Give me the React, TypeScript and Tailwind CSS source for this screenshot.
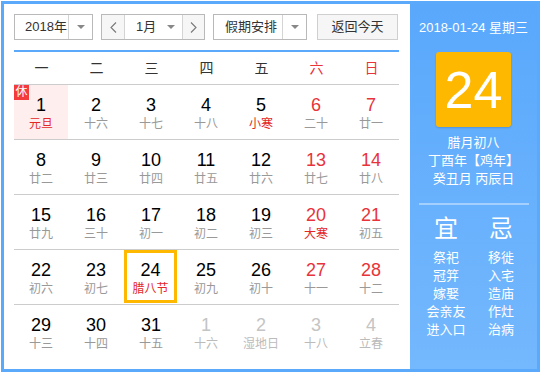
import React from 'react';

type Day = {
  num: number;
  lunar: string;
  weekend?: boolean;
  festival?: boolean;
  other?: boolean;
  rest?: boolean;
  today?: boolean;
};

const weekdays = ['一', '二', '三', '四', '五', '六', '日'];

const rows: Day[][] = [
  [
    { num: 1, lunar: '元旦', festival: true, rest: true },
    { num: 2, lunar: '十六' },
    { num: 3, lunar: '十七' },
    { num: 4, lunar: '十八' },
    { num: 5, lunar: '小寒', festival: true },
    { num: 6, lunar: '二十', weekend: true },
    { num: 7, lunar: '廿一', weekend: true },
  ],
  [
    { num: 8, lunar: '廿二' },
    { num: 9, lunar: '廿三' },
    { num: 10, lunar: '廿四' },
    { num: 11, lunar: '廿五' },
    { num: 12, lunar: '廿六' },
    { num: 13, lunar: '廿七', weekend: true },
    { num: 14, lunar: '廿八', weekend: true },
  ],
  [
    { num: 15, lunar: '廿九' },
    { num: 16, lunar: '三十' },
    { num: 17, lunar: '初一' },
    { num: 18, lunar: '初二' },
    { num: 19, lunar: '初三' },
    { num: 20, lunar: '大寒', weekend: true, festival: true },
    { num: 21, lunar: '初五', weekend: true },
  ],
  [
    { num: 22, lunar: '初六' },
    { num: 23, lunar: '初七' },
    { num: 24, lunar: '腊八节', festival: true, today: true },
    { num: 25, lunar: '初九' },
    { num: 26, lunar: '初十' },
    { num: 27, lunar: '十一', weekend: true },
    { num: 28, lunar: '十二', weekend: true },
  ],
  [
    { num: 29, lunar: '十三' },
    { num: 30, lunar: '十四' },
    { num: 31, lunar: '十五' },
    { num: 1, lunar: '十六', other: true },
    { num: 2, lunar: '湿地日', other: true },
    { num: 3, lunar: '十八', other: true },
    { num: 4, lunar: '立春', other: true },
  ],
];

const yi = ['祭祀', '冠笄', '嫁娶', '会亲友', '进入口'];
const ji = ['移徙', '入宅', '造庙', '作灶', '治病'];

function Caret() {
  return (
    <svg width="8" height="4" viewBox="0 0 8 4">
      <polygon points="0,0 8,0 4,4" fill="#888" />
    </svg>
  );
}

function Chevron({ dir }: { dir: 'left' | 'right' }) {
  return (
    <svg width="7" height="11" viewBox="0 0 7 11">
      <polyline
        points={dir === 'left' ? '6,0.5 1,5.5 6,10.5' : '1,0.5 6,5.5 1,10.5'}
        fill="none"
        stroke="#777"
        strokeWidth="1.1"
      />
    </svg>
  );
}

function DayCell({ day }: { day: Day }) {
  const numColor = day.other
    ? 'text-[#c4c4c4]'
    : day.weekend
    ? 'text-[#e8333b]'
    : 'text-black';
  const lunarColor = day.other
    ? 'text-[#bbbbbb]'
    : day.festival
    ? 'text-[#e32727]'
    : 'text-[#999999]';

  if (day.today) {
    return (
      <div className="h-full">
        <div className="flex h-[53px] w-[53px] flex-col items-center border-[3px] border-[#ffb800] pt-[7px]">
          <span className={`text-[18px] leading-[20px] ${numColor}`}>{day.num}</span>
          <span className={`mt-px text-[12px] leading-[16px] ${lunarColor}`}>{day.lunar}</span>
        </div>
      </div>
    );
  }

  return (
    <div className="h-full">
      <div
        className={`relative flex h-[54px] w-[54px] flex-col items-center pt-[10px] ${
          day.rest ? 'bg-[#ffeeee]' : ''
        }`}
      >
        {day.rest && (
          <span className="absolute left-0 top-0 flex h-[15px] w-[15px] items-center justify-center bg-[#f43b3b] text-[12px] leading-[15px] text-white">
            休
          </span>
        )}
        <span className={`text-[18px] leading-[20px] ${numColor}`}>{day.num}</span>
        <span className={`mt-px text-[12px] leading-[16px] ${lunarColor}`}>{day.lunar}</span>
      </div>
    </div>
  );
}

export default function App() {
  return (
    <div className="h-[375px] w-[543px] bg-white pl-px pt-px font-['Liberation_Sans','Noto_Sans_CJK_SC',sans-serif]">
      <div className="flex h-[371px] w-[539px] border-[3px] border-[#5aa9fb]">
        {/* left: calendar */}
        <div className="w-[406px] bg-white pl-[10px] pt-[10px]">
          <div className="flex h-[26px] text-[13px] text-[#333]">
            <div className="flex w-[79px] border border-[#b9b9b9] bg-white">
              <div className="flex flex-1 items-center pl-[10px]">2018年</div>
              <div className="flex w-[24px] items-center justify-center border-l border-[#d4d4d4]">
                <Caret />
              </div>
            </div>

            <div className="ml-[8px] flex w-[104px] border border-[#b9b9b9] bg-white">
              <div className="flex w-[22px] items-center justify-center bg-[#f6f6f6]">
                <Chevron dir="left" />
              </div>
              <div className="flex flex-1 items-center border-x border-[#d4d4d4] pl-[11px]">
                <span className="flex-1">1月</span>
                <span className="mr-[7px] flex">
                  <Caret />
                </span>
              </div>
              <div className="flex w-[21px] items-center justify-center bg-[#f6f6f6]">
                <Chevron dir="right" />
              </div>
            </div>

            <div className="ml-[8px] flex w-[94px] border border-[#b9b9b9] bg-white">
              <div className="flex flex-1 items-center pl-[11px]">假期安排</div>
              <div className="flex w-[24px] items-center justify-center border-l border-[#d4d4d4]">
                <Caret />
              </div>
            </div>

            <div className="ml-[10px] flex w-[81px] items-center justify-center border border-[#cfcfcf] bg-[#f6f6f6]">
              返回今天
            </div>
          </div>

          <div className="mt-[10px] h-[2px] w-[385px] bg-[#5aa9fb]" />

          <div className="grid h-[32px] w-[385px] grid-cols-7 items-center text-[14px]">
            {weekdays.map((w, i) => (
              <div
                key={w}
                className={`text-center ${i >= 5 ? 'text-[#e8333b]' : 'text-[#333]'}`}
              >
                {w}
              </div>
            ))}
          </div>

          {rows.map((row, ri) => (
            <div
              key={ri}
              className="grid h-[55px] w-[385px] grid-cols-7 border-t border-[#cccccc]"
            >
              {row.map((d, di) => (
                <DayCell key={di} day={d} />
              ))}
            </div>
          ))}
        </div>

        {/* right: detail panel */}
        <div className="flex flex-1 flex-col items-center bg-gradient-to-b from-[#59a8fc] to-[#74b8fd] pt-[15px] text-white">
          <div className="text-[13px] leading-[18px]">2018-01-24 星期三</div>

          <div className="mt-[15px] flex h-[75px] w-[75px] items-center justify-center rounded-[3px] bg-[#ffb800] text-[52px] leading-none shadow-[0_1px_2px_rgba(0,0,0,0.15)]">
            24
          </div>

          <div className="mt-[7px] flex flex-col items-center text-[13px] leading-[18px]">
            <span>腊月初八</span>
            <span>丁酉年【鸡年】</span>
            <span>癸丑月 丙辰日</span>
          </div>

          <div className="mt-[15px] h-[2px] w-[110px] bg-white/40" />

          <div className="mt-[10px] flex w-[110px]">
            <div className="w-[55px] text-center text-[24px] leading-[28px]">宜</div>
            <div className="w-[55px] text-center text-[24px] leading-[28px]">忌</div>
          </div>

          <div className="mt-[6px] flex w-[110px] text-[13px] leading-[18px]">
            <div className="flex w-[55px] flex-col items-center">
              {yi.map((t) => (
                <span key={t}>{t}</span>
              ))}
            </div>
            <div className="flex w-[55px] flex-col items-center">
              {ji.map((t) => (
                <span key={t}>{t}</span>
              ))}
            </div>
          </div>
        </div>
      </div>
    </div>
  );
}
